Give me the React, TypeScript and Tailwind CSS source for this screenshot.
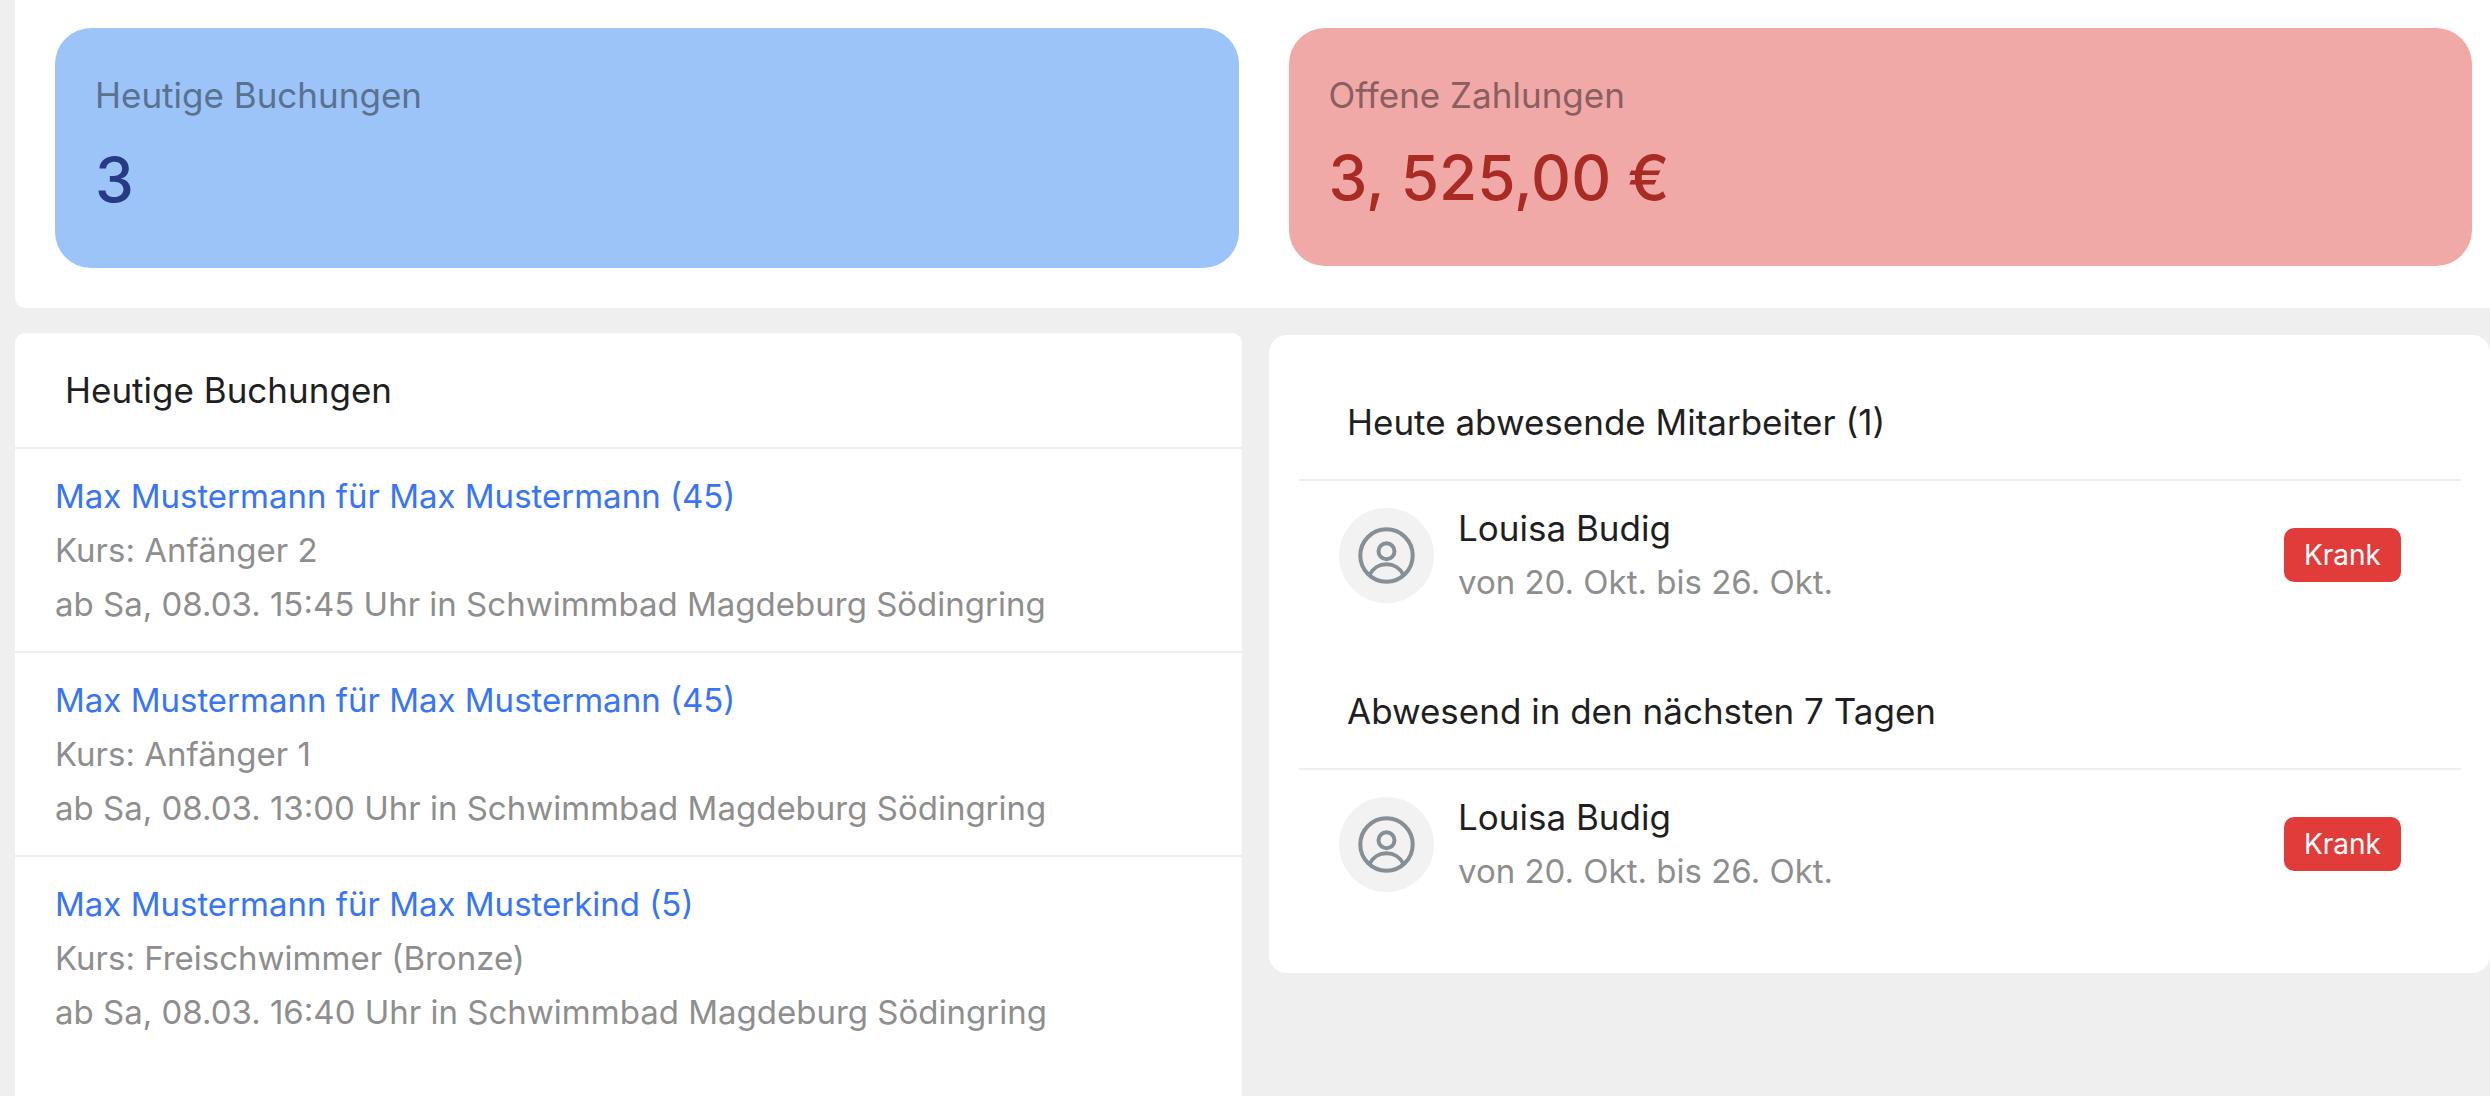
type Booking = { title: string; course: string; when: string };
type Absence = { name: string; period: string; reason: string };

const bookings: Booking[] = [
  {
    title: "Max Mustermann für Max Mustermann (45)",
    course: "Kurs: Anfänger 2",
    when: "ab Sa, 08.03. 15:45 Uhr in Schwimmbad Magdeburg Södingring",
  },
  {
    title: "Max Mustermann für Max Mustermann (45)",
    course: "Kurs: Anfänger 1",
    when: "ab Sa, 08.03. 13:00 Uhr in Schwimmbad Magdeburg Södingring",
  },
  {
    title: "Max Mustermann für Max Musterkind (5)",
    course: "Kurs: Freischwimmer (Bronze)",
    when: "ab Sa, 08.03. 16:40 Uhr in Schwimmbad Magdeburg Södingring",
  },
];

const absentToday: Absence[] = [
  { name: "Louisa Budig", period: "von 20. Okt. bis 26. Okt.", reason: "Krank" },
];

const absentSoon: Absence[] = [
  { name: "Louisa Budig", period: "von 20. Okt. bis 26. Okt.", reason: "Krank" },
];

function Avatar() {
  return (
    <span className="flex size-[95px] shrink-0 items-center justify-center rounded-full bg-[#f2f2f2] text-[#868e96]">
      <svg
        viewBox="0 0 58 58"
        className="size-[58px]"
        fill="none"
        stroke="currentColor"
        strokeWidth="4"
        aria-hidden="true"
      >
        <circle cx="28.5" cy="29.5" r="26.2" />
        <circle cx="28.5" cy="25.3" r="8" />
        <path d="M11.6 48.8a18.8 18.8 0 0 1 33.8 0" />
      </svg>
    </span>
  );
}

function AbsenceSection({ title, items }: { title: string; items: Absence[] }) {
  return (
    <section className="mb-[25px]">
      <h2 className="border-b-2 border-[#efefef] px-12 py-[30px]">{title}</h2>
      <ul>
        {items.map((item) => (
          <li key={item.name} className="flex items-center gap-6 py-5 pr-[60px] pl-10">
            <Avatar />
            <div className="min-w-0 flex-1">
              <p>{item.name}</p>
              <p className="text-[33px] text-[#8e8e8e]">{item.period}</p>
            </div>
            <span className="rounded-[10px] bg-[#e13c39] px-5 text-[28px] text-white">
              {item.reason}
            </span>
          </li>
        ))}
      </ul>
    </section>
  );
}

export default function App() {
  return (
    <main className="flex min-h-screen flex-col gap-[25px] bg-[#efefef] pl-[15px] font-['Inter',sans-serif] text-[35px] leading-[54px] text-[#1f1f1f]">
      <section className="grid grid-cols-2 items-start gap-[50px] rounded-bl-[10px] bg-white pt-7 pr-[18px] pb-10 pl-10">
        <div className="rounded-[36px] bg-[#9dc4f9] p-10">
          <p className="text-[#5a718f]">Heutige Buchungen</p>
          <p className="mt-2.5 text-[62px] leading-[96px] font-medium text-[#263a85]">3</p>
        </div>
        <div className="rounded-[36px] bg-[#f0a9a7] p-10">
          <p className="text-[#8a5f5f]">Offene Zahlungen</p>
          <p className="mt-2 text-[62px] leading-[96px] font-medium text-[#a92b24]">
            3, 525,00 €
          </p>
        </div>
      </section>

      <div className="grid flex-1 grid-cols-[1227fr_1221fr] gap-[27px]">
        <section className="rounded-t-[10px] bg-white">
          <h2 className="px-[50px] py-[30px]">Heutige Buchungen</h2>
          <ul className="text-[33px]">
            {bookings.map((booking) => (
              <li key={booking.when} className="border-t-2 border-[#efefef] px-10 py-5">
                <a href="#" className="block text-[#3875f6]">
                  {booking.title}
                </a>
                <p className="text-[#8e8e8e]">{booking.course}</p>
                <p className="text-[#8e8e8e]">{booking.when}</p>
              </li>
            ))}
          </ul>
        </section>

        <aside className="mt-0.5 self-start rounded-[18px] bg-white pt-[30px] pr-[29px] pb-[30px] pl-[30px]">
          <AbsenceSection title="Heute abwesende Mitarbeiter (1)" items={absentToday} />
          <AbsenceSection title="Abwesend in den nächsten 7 Tagen" items={absentSoon} />
        </aside>
      </div>
    </main>
  );
}
